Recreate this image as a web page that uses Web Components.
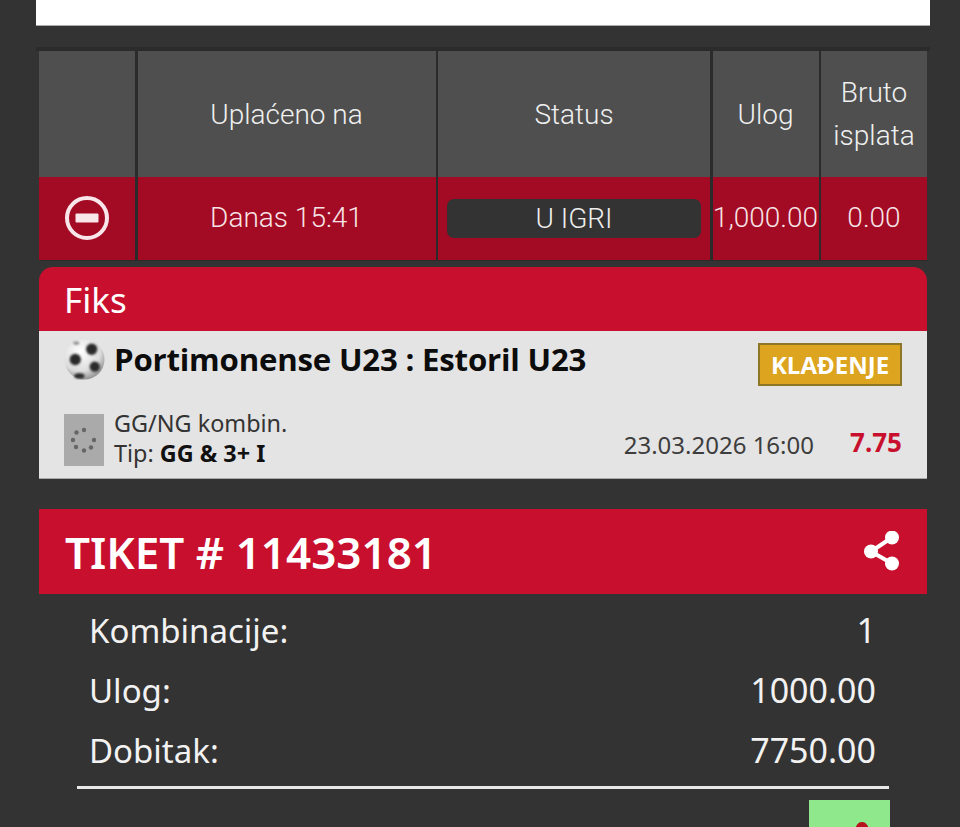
<!DOCTYPE html>
<html>
<head>
<meta charset="utf-8">
<title>Tiket</title>
<style>
  html, body { margin: 0; height: 827px; overflow: hidden; background: #333333; }
  body { padding: 0 30px 0 36px; box-sizing: border-box; }
</style>
</head>
<body>
<top-strip></top-strip>
<bets-table></bets-table>
<fiks-card></fiks-card>
<ticket-summary></ticket-summary>

<script>
class TopStrip extends HTMLElement {
  constructor() {
    super();
    this.attachShadow({ mode: "open" }).innerHTML = `
      <style>
        :host { display: block; height: 25px; background: #fff; border-bottom: 1px solid #aaa; }
      </style>`;
  }
}

class BetsTable extends HTMLElement {
  constructor() {
    super();
    this.attachShadow({ mode: "open" }).innerHTML = `
      <style>
        :host {
          display: block;
          margin-top: 21px;
          padding: 4px 3px 0;
          box-shadow: inset 0 4px 0 #2b2b2b;
          font: 300 28px/43px Roboto, sans-serif;
          color: #f0f0f0;
        }
        .grid {
          display: grid;
          grid-template-columns: 96px 298px 272px 106px 106px;
          grid-template-rows: 126px 83px;
          column-gap: 2.5px;
          padding-bottom: 1px;
          background: #2b2b2b;
        }
        .c { display: flex; align-items: center; justify-content: center; text-align: center; white-space: nowrap; }
        .h { background: #4f4f4f; }
        .r { background: #a30a23; color: #f6e3e6; padding-bottom: 2px; box-sizing: border-box; }
        .pill {
          width: 254px; height: 39px; box-sizing: border-box; margin-bottom: -1px;
          display: flex; align-items: center; justify-content: center;
          background: #333; border-radius: 7px; color: #eee;
        }
        svg { display: block; }
      </style>
      <div class="grid">
        <div class="c h"></div>
        <div class="c h">Uplaćeno na</div>
        <div class="c h">Status</div>
        <div class="c h">Ulog</div>
        <div class="c h">Bruto<br>isplata</div>
        <div class="c r">
          <svg width="44" height="44" viewBox="0 0 44 44">
            <circle cx="22" cy="22" r="20" fill="none" stroke="#f9e6ea" stroke-width="4"/>
            <rect x="10.5" y="17.5" width="23" height="9" rx="1" fill="#f9e6ea"/>
          </svg>
        </div>
        <div class="c r">Danas 15:41</div>
        <div class="c r"><span class="pill">U IGRI</span></div>
        <div class="c r">1,000.00</div>
        <div class="c r">0.00</div>
      </div>`;
  }
}

class FiksCard extends HTMLElement {
  constructor() {
    super();
    this.attachShadow({ mode: "open" }).innerHTML = `
      <style>
        :host {
          display: block;
          margin: 6px 3px 0;
          font-family: "Noto Sans", sans-serif;
        }
        .head {
          height: 64px; box-sizing: border-box; padding: 0 25px;
          display: flex; align-items: center;
          background: #c8102e; color: #fff;
          border-radius: 14px 14px 0 0;
          font-size: 35px; font-weight: 400;
        }
        .body {
          height: 148px; box-sizing: border-box;
          background: #e4e4e4; border-bottom: 1px solid #aaa;
          padding: 7px 25px 0 25px;
          display: flex; flex-direction: column;
        }
        .match { display: flex; align-items: center; height: 42px; margin-bottom: 32px; }
        .teams {
          flex: 1; margin-left: 9px; white-space: nowrap;
          font: 700 31.2px/42px "Open Sans", sans-serif; color: #0c0c0c; letter-spacing: -0.2px;
        }
        .badge {
          width: 144px; height: 43px; box-sizing: border-box; margin-top: 10px;
          display: flex; align-items: center; justify-content: center;
          background: #dca41f; border: 2px solid #8f7526; color: #fff;
          font: 700 24px "Open Sans", sans-serif;
        }
        .info { display: flex; align-items: center; }
        .thumb {
          width: 40px; height: 52px; background: #aaaaaa; flex: none;
          display: flex; align-items: center; justify-content: center;
        }
        .market { flex: 1; margin: -4px 0 0 10px; font-size: 23.4px; line-height: 30px; color: #333; }
        .market b { color: #111; }
        .date { font-size: 24px; color: #3d3d3d; margin-top: 8px; }
        .odd { width: 88px; text-align: right; font-size: 26px; font-weight: 700; color: #c8102e; margin-top: 3px; }
      </style>
      <div class="head">Fiks</div>
      <div class="body">
        <div class="match">
          <svg width="41" height="41" viewBox="0 0 40 40">
            <defs>
              <radialGradient id="ball" cx="40%" cy="30%" r="70%">
                <stop offset="0" stop-color="#fff"/>
                <stop offset="0.7" stop-color="#ddd"/>
                <stop offset="1" stop-color="#999"/>
              </radialGradient>
              <filter id="soft"><feGaussianBlur stdDeviation="0.9"/></filter>
            </defs>
            <circle cx="20" cy="20" r="19.5" fill="url(#ball)"/>
            <g fill="#2b2b2b" filter="url(#soft)">
              <circle cx="27" cy="10" r="5.5"/>
              <circle cx="11" cy="20" r="5.5"/>
              <circle cx="30" cy="27" r="5"/>
              <ellipse cx="15" cy="36" rx="5" ry="2.5"/>
              <ellipse cx="12" cy="4" rx="3" ry="1.5" fill="#888"/>
            </g>
          </svg>
          <span class="teams">Portimonense U23 : Estoril U23</span>
          <span class="badge">KLAĐENJE</span>
        </div>
        <div class="info">
          <span class="thumb">
            <svg width="26" height="26" viewBox="0 0 26 26" fill="#666">
              <circle cx="13" cy="3" r="2.2"/>
              <circle cx="5.5" cy="5.5" r="2.2"/>
              <circle cx="2" cy="13" r="2.2"/>
              <circle cx="5" cy="20" r="2.2"/>
              <circle cx="13" cy="23.5" r="2.2"/>
              <circle cx="20" cy="20.5" r="2.2"/>
              <circle cx="23" cy="13" r="2.2"/>
            </svg>
          </span>
          <div class="market">GG/NG kombin.<br>Tip: <b>GG &amp; 3+ I</b></div>
          <span class="date">23.03.2026 16:00</span>
          <span class="odd">7.75</span>
        </div>
      </div>`;
  }
}

class TicketSummary extends HTMLElement {
  constructor() {
    super();
    this.attachShadow({ mode: "open" }).innerHTML = `
      <style>
        :host { display: block; margin: 30px 3px 0; font-family: "Noto Sans", sans-serif; color: #f2f2f2; }
        .head {
          height: 85px; box-sizing: border-box; padding: 0 27px 0 26px;
          display: flex; align-items: center; justify-content: space-between;
          background: #c8102e; color: #fff;
        }
        h1 { margin: 0; font: 600 44px "Noto Sans", sans-serif; }
        .rows { padding: 6px 51px 0 50px; }
        .row { display: flex; justify-content: space-between; height: 60px; align-items: center; font-size: 33px; }
        .row span + span { font-size: 34px; }
        hr { margin: 6px 38px 0; height: 3px; border: 0; background: #e8e8e8; }
        .foot { display: flex; justify-content: flex-end; margin: 11px 37px 0 0; }
        .green {
          width: 81px; height: 60px; background: #8fe88b;
          padding: 22px 0 0 45px; box-sizing: border-box;
        }
        .green svg { display: block; }
      </style>
      <div class="head">
        <h1>TIKET # 11433181</h1>
        <svg width="36" height="42" viewBox="0 0 36 42" fill="#fff" stroke="#fff">
          <line x1="7" y1="20.5" x2="28" y2="6.5" stroke-width="4"/>
          <line x1="7" y1="20.5" x2="28" y2="32.5" stroke-width="4"/>
          <circle cx="7" cy="20.5" r="7" stroke="none"/>
          <circle cx="28" cy="6.5" r="7" stroke="none"/>
          <circle cx="28" cy="32.5" r="7" stroke="none"/>
        </svg>
      </div>
      <div class="rows">
        <div class="row"><span>Kombinacije:</span><span>1</span></div>
        <div class="row"><span>Ulog:</span><span>1000.00</span></div>
        <div class="row"><span>Dobitak:</span><span>7750.00</span></div>
      </div>
      <hr>
      <div class="foot">
        <div class="green">
          <svg width="16" height="10" viewBox="0 0 16 10"><path d="M8 0 C12 0 14 3 16 10 L0 10 C2 3 4 0 8 0 Z" fill="#b5141f"/></svg>
        </div>
      </div>`;
  }
}

customElements.define("top-strip", TopStrip);
customElements.define("bets-table", BetsTable);
customElements.define("fiks-card", FiksCard);
customElements.define("ticket-summary", TicketSummary);
</script>
</body>
</html>
